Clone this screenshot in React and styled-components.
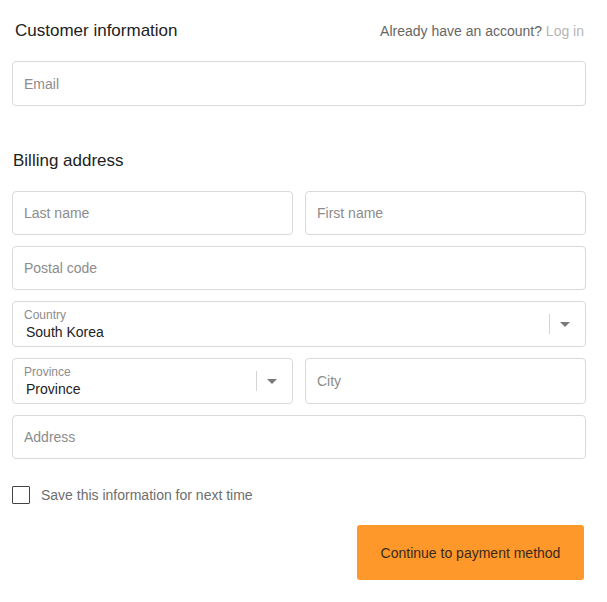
import styled, { createGlobalStyle } from "styled-components";

const GlobalStyle = createGlobalStyle`
  body {
    margin: 0;
    background: #fff;
    font-family: "Liberation Sans", Arial, sans-serif;
  }
`;

export default function App() {
  return (
    <>
      <GlobalStyle />
      <StyledForm>
        <SectionHead>
          <Title>Customer information</Title>
          <Account>
            Already have an account? <a href="#login">Log in</a>
          </Account>
        </SectionHead>
        <Field $email>
          <Placeholder>Email</Placeholder>
        </Field>

        <Title $billing>Billing address</Title>
        <Stack>
          <Row>
            <Field>
              <Placeholder>Last name</Placeholder>
            </Field>
            <Field>
              <Placeholder>First name</Placeholder>
            </Field>
          </Row>
          <Field>
            <Placeholder>Postal code</Placeholder>
          </Field>
          <Select label="Country" value="South Korea" />
          <Row>
            <Select label="Province" value="Province" />
            <Field $tall>
              <Placeholder>City</Placeholder>
            </Field>
          </Row>
          <Field>
            <Placeholder>Address</Placeholder>
          </Field>
        </Stack>

        <Save>
          <Box />
          <span>Save this information for next time</span>
        </Save>
        <Actions>
          <Button>Continue to payment method</Button>
        </Actions>
      </StyledForm>
    </>
  );
}

const Select = ({ label, value }) => (
  <Field $tall>
    <SelectText>
      <small>{label}</small>
      <span>{value}</span>
    </SelectText>
    <Divider />
    <Caret />
  </Field>
);

//style
const StyledForm = styled.div`
  width: 574px;
  padding: 21px 0 0 12px;
  box-sizing: content-box;
`;

const SectionHead = styled.div`
  display: flex;
  justify-content: space-between;
  align-items: baseline;
  padding: 0 2px 0 3px;
  margin-bottom: 20px;
`;

const Title = styled.h2`
  margin: ${(p) => (p.$billing ? "45px 0 20px 1px" : "0")};
  font-size: 17px;
  line-height: 20px;
  font-weight: 400;
  color: #222;
`;

const Account = styled.div`
  font-size: 14px;
  color: #666;

  a {
    color: #b5b5b5;
    text-decoration: none;
  }
`;

const Stack = styled.div`
  display: flex;
  flex-direction: column;
  gap: 11px;
`;

const Row = styled.div`
  display: grid;
  grid-template-columns: 1fr 1fr;
  gap: 12px;
`;

const Field = styled.div`
  height: ${(p) => (p.$tall ? "46px" : p.$email ? "45px" : "44px")};
  box-sizing: border-box;
  border: 1px solid #d9d9d9;
  border-radius: 4px;
  display: flex;
  align-items: center;
  padding: 0 11px;
  background: #fff;
`;

const Placeholder = styled.span`
  font-size: 14px;
  color: #8c8c8c;
`;

const SelectText = styled.div`
  flex: 1;
  display: flex;
  flex-direction: column;
  padding-top: 1px;

  small {
    font-size: 12px;
    color: #8c8c8c;
    line-height: 14px;
  }

  span {
    font-size: 14px;
    color: #222;
    line-height: 18px;
    padding-left: 2px;
    margin-top: 1px;
  }
`;

const Divider = styled.div`
  width: 1px;
  height: 20px;
  background: #d4d4d4;
  margin-right: 10px;
`;

const Caret = styled.div`
  width: 0;
  height: 0;
  border-left: 5px solid transparent;
  border-right: 5px solid transparent;
  border-top: 5px solid #7a7a7a;
  margin-right: 4px;
`;

const Save = styled.label`
  display: flex;
  align-items: center;
  gap: 11px;
  margin-top: 27px;
  font-size: 14px;
  color: #6e6e6e;
`;

const Box = styled.span`
  width: 18px;
  height: 18px;
  box-sizing: border-box;
  border: 1px solid #444;
  border-radius: 1px;
`;

const Actions = styled.div`
  display: flex;
  justify-content: flex-end;
  margin-top: 21px;
  padding-right: 2px;
`;

const Button = styled.button`
  width: 227px;
  height: 55px;
  border: none;
  border-radius: 3px;
  background: #ff982b;
  color: #3a2a1c;
  font-family: "Liberation Sans", Arial, sans-serif;
  font-size: 14px;
`;
